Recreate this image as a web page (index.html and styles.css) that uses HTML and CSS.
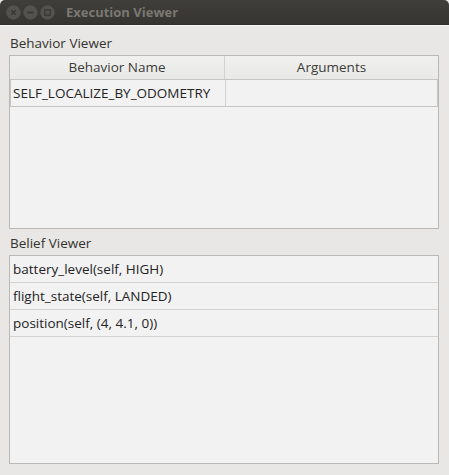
FILE: index.html
```html
<!DOCTYPE html>
<html>
<head>
<meta charset="utf-8">
<link rel="stylesheet" href="styles.css">
</head>
<body>
<div class="window">
  <div class="titlebar">
    <div class="buttons">
      <span class="btn"><svg width="15" height="15" viewBox="0 0 15 15"><circle cx="7.5" cy="7.5" r="7.2" fill="#53524e"/><path d="M5.3 5.3 L9.7 9.7 M9.7 5.3 L5.3 9.7" stroke="#383733" stroke-width="1.4"/></svg></span>
      <span class="btn"><svg width="15" height="15" viewBox="0 0 15 15"><circle cx="7.5" cy="7.5" r="7.2" fill="#53524e"/><path d="M4.3 7.5 H10.7" stroke="#383733" stroke-width="1.7"/></svg></span>
      <span class="btn"><svg width="15" height="15" viewBox="0 0 15 15"><circle cx="7.5" cy="7.5" r="7.2" fill="#53524e"/><rect x="4.8" y="4.8" width="5.4" height="5.4" fill="none" stroke="#383733" stroke-width="1.3"/></svg></span>
    </div>
    <div class="title">Execution Viewer</div>
  </div>
  <div class="content">
    <div class="section-label">Behavior Viewer</div>
    <div class="table-box">
      <div class="thead">
        <div class="th col1">Behavior Name</div>
        <div class="th col2">Arguments</div>
      </div>
      <div class="tr">
        <div class="td col1">SELF_LOCALIZE_BY_ODOMETRY</div>
        <div class="td col2"></div>
      </div>
    </div>
    <div class="section-label second">Belief Viewer</div>
    <div class="list-box">
      <div class="li">battery_level(self, HIGH)</div>
      <div class="li">flight_state(self, LANDED)</div>
      <div class="li">position(self, (4, 4.1, 0))</div>
    </div>
  </div>
</div>
</body>
</html>
```
FILE: styles.css
```css
* { box-sizing: border-box; }
html, body { margin: 0; padding: 0; background: #e8e7e5; }
body { width: 449px; height: 475px; overflow: hidden; font-family: "Open Sans", "DejaVu Sans", sans-serif; font-size: 13.5px; color: #3c3b37; }
.window { width: 449px; height: 475px; display: flex; flex-direction: column; background: #e8e7e5; }
.titlebar { height: 25px; background: linear-gradient(#3f3e3a, #363531); border-radius: 5px 5px 0 0; display: flex; align-items: center; padding-left: 6px; border-bottom: 1px solid #2e2d2a; }
.buttons { display: flex; gap: 2px; }
.btn { width: 15px; height: 15px; display: block; }
.btn svg { display: block; }
.title { margin-left: 11px; font-weight: bold; color: #7a7873; font-size: 13px; }
.content { flex: 1; padding: 8px 10px 11px 9px; display: flex; flex-direction: column; border-top: 1px solid #f5f5f4; }
.section-label { height: 18px; line-height: 18px; padding-left: 1px; color: #33322e; }
.section-label.second { margin-top: 5px; }
.table-box { height: 174px; background: #f2f2f2; border: 1px solid #b9b8b5; margin-top: 3px; }
.thead { display: flex; height: 24px; background: linear-gradient(#f0f0ef, #e9e9e8); border-bottom: 1px solid #c6c5c2; }
.th { text-align: center; line-height: 23px; color: #3c3b37; }
.col1 { width: 215px; border-right: 1px solid #d2d1ce; }
.col2 { flex: 1; }
.col2.td { border-right: 1px solid #c6c5c2; }
.tr { display: flex; height: 27px; border-bottom: 1px solid #c6c5c2; border-left: 1px solid #c6c5c2; }
.td { line-height: 26px; padding-left: 2px; color: #24231f; }
.list-box { flex: 1; background: #f2f2f2; border: 1px solid #b9b8b5; margin-top: 3px; }
.li { height: 27px; line-height: 26px; padding-left: 3px; border-bottom: 1px solid #d4d3d0; color: #24231f; }
```
